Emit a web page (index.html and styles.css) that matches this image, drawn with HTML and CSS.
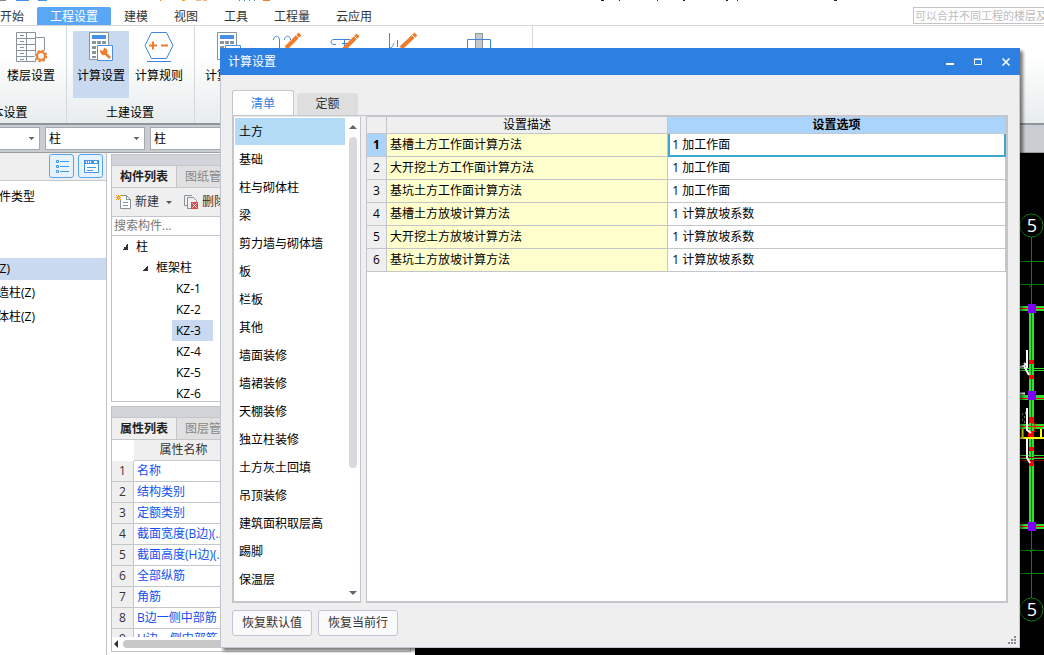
FILE: index.html
```html
<!DOCTYPE html>
<html lang="zh-CN">
<head>
<meta charset="utf-8">
<title>计算设置</title>
<link rel="stylesheet" href="styles.css">
</head>
<body>
<div class="app">
  <header class="titlebar">
    <svg width="840" height="3" viewBox="0 0 840 3" aria-hidden="true">
      <path d="M0 .5h6" stroke="#888"/><path d="M16 .5h13M38 .5h9" stroke="#4a90e2"/>
      <path d="M160.500 0v1" stroke="#f07c2b"/><path d="M182 0h3v1h-3z" fill="#f0a020"/><path d="M196 .5h5M203 .5h4" stroke="#f3b48a"/><path d="M239 .5h1M244 .5h1M249 .5h1M254 .5h1" stroke="#4a7fc0"/><path d="M263 .5h7" stroke="#f07c2b"/>
      <path d="M601 .5h3M619 .5h1M657 .5h1M683 .5h2M726 .5h2M737 .5h1M834 .5h3" stroke="#222"/>
    </svg>
  </header>
  <div class="menu">
    <nav class="menu-tabs">
      <button class="menu-tab">开始</button>
      <button class="menu-tab active">工程设置</button>
      <button class="menu-tab">建模</button>
      <button class="menu-tab">视图</button>
      <button class="menu-tab">工具</button>
      <button class="menu-tab">工程量</button>
      <button class="menu-tab">云应用</button>
    </nav>
    <input class="help-search" type="text" aria-label="搜索功能" placeholder="可以合并不同工程的楼层及构件">
  </div>

  <div class="ribbon">
    <section class="group group-first">
      <div class="tools">
        <button class="tool">
          <svg width="32" height="32" viewBox="0 0 32 32" fill="none" stroke="#87949b">
            <path d="M1.500 1.500h19v29h-19zM1.500 7.500h19M1.500 13.500h19M1.500 19.500h19M1.500 25.500h19M11.500 1.500v29M20.500 6.500h9v14M5 4.500h4M5 10.500h4M5 16.500h4M5 22.500h4M5 28.500h4"/>
            <circle cx="26" cy="25" r="6.500" fill="#f3f3f3" stroke="none"/>
            <circle cx="26" cy="25" r="4" stroke="#f07c2b" stroke-width="2"/>
            <circle cx="26" cy="25" r="5.500" stroke="#f07c2b" stroke-width="1.500" stroke-dasharray="2.200 2.120"/>
          </svg>
          <span>楼层设置</span>
        </button>
      </div>
      <h2 class="caption">基本设置</h2>
    </section>
    <section class="group">
      <div class="tools">
        <button class="tool selected">
          <svg width="32" height="32" viewBox="0 0 32 32" fill="none">
            <path d="M4.500 1.500h19v27h-19z" fill="#fff" stroke="#87949b"/>
            <path d="M7 4h14v4H7z" fill="#4a90e2"/>
            <path d="M7 10h4v3H7zM12 10h4v3h-4zM17 10h4v3h-4zM7 15h4v3H7zM7 20h4v3H7zM7 25h4v2H7z" fill="#87949b"/>
            <path d="M12.500 14.500h15v15h-15z" fill="#fff" stroke="#4a90e2"/>
            <path d="M19 21l6 6" stroke="#f07c2b" stroke-width="2.500"/>
            <path d="M15 19l3 1 1-3c3 0 4 3 3 5l-2 2c-3 1-5-2-5-5z" fill="#f07c2b"/>
          </svg>
          <span>计算设置</span>
        </button>
        <button class="tool">
          <svg width="32" height="32" viewBox="0 0 32 32" fill="none" stroke="#3f86dc">
            <path d="M8.500 1.500h15l6.500 13-6.500 13h-15L2 14.500zM4 30.500h24"/>
            <path d="M6 14.500h8M10 10.500v8M18 14.500h7" stroke="#f07c2b" stroke-width="2"/>
          </svg>
          <span>计算规则</span>
        </button>
      </div>
      <h2 class="caption">土建设置</h2>
    </section>
    <section class="group">
      <div class="tools">
        <button class="tool">
          <svg width="32" height="32" viewBox="0 0 32 32" fill="none">
            <path d="M4.500 1.500h19v27h-19z" fill="#fff" stroke="#87949b"/>
            <path d="M7 4h14v4H7z" fill="#4a90e2"/>
            <path d="M7 10h4v3H7zM12 10h4v3h-4zM17 10h4v3h-4zM7 15h4v3H7z" fill="#87949b"/>
            <path d="M12.500 14.500h15v15h-15z" fill="#fff" stroke="#4a90e2"/>
          </svg>
          <span>计算设置</span>
        </button>
        <button class="tool" aria-label="比重设置">
          <svg width="32" height="32" viewBox="0 0 32 32" fill="none" stroke="#3f86dc">
            <path d="M2.500 9c0-5 6-5 6 0v9M13.500 9c0-5 6-5 6 0"/><path d="M15 17L29 3" stroke="#f07c2b" stroke-width="4"/><path d="M25 4l3 3" stroke="#fff"/>
          </svg>
        </button>
        <button class="tool" aria-label="弯钩设置">
          <svg width="32" height="32" viewBox="0 0 32 32" fill="none" stroke="#3f86dc">
            <path d="M21 8.500H5c-4 0-4 5 0 5h2M13 12.500h9M15.500 8v8"/><path d="M15 18L29 4" stroke="#f07c2b" stroke-width="4"/><path d="M25 5l3 3" stroke="#fff"/>
          </svg>
        </button>
        <button class="tool" aria-label="损耗设置">
          <svg width="32" height="32" viewBox="0 0 32 32" fill="none" stroke="#3f86dc">
            <path d="M2.500 2v15M2 17c4 0 4-3 5-5M10.500 9v7"/><path d="M14 17L29 3" stroke="#f07c2b" stroke-width="4"/><path d="M25 4l3 3" stroke="#fff"/>
          </svg>
        </button>
        <button class="tool tool-wide" aria-label="弯曲调整值设置">
          <svg width="32" height="32" viewBox="0 0 32 32" fill="none">
            <path d="M12.500 2.500h7v20h-7z" fill="#c3c8cc" stroke="#87949b"/><path d="M4.500 8.500h23v14h-23z" stroke="#3f86dc"/>
          </svg>
        </button>
      </div>
      <h2 class="caption">钢筋设置</h2>
    </section>
  </div>

  <div class="selectors">
    <select class="picker picker-first" aria-label="楼层"><option></option></select>
    <select class="picker" aria-label="构件大类"><option>柱</option></select>
    <select class="picker" aria-label="构件类型"><option>柱</option></select>
  </div>

  <main class="workspace">
    <aside class="navigator">
      <div class="nav-tools">
        <button class="square" aria-label="列表视图">
          <svg width="16" height="16" viewBox="0 0 16 16" fill="none" stroke="#3f98ee"><path d="M2.500 2.500h2v2h-2zM2.500 7.500h2v2h-2zM2.500 12.500h2v2h-2zM6 3.500h9M6 8.500h9M6 13.500h9"/></svg>
        </button>
        <button class="square" aria-label="面板视图">
          <svg width="16" height="16" viewBox="0 0 16 16" fill="none"><path d="M1.500 2.500h14v12h-14z" fill="#fff" stroke="#3f98ee"/><path d="M1 2h15v4H1z" fill="#3f98ee"/><path d="M3 4h1M5 4h1M7 4h1M11 4h3" stroke="#fff" stroke-width="2"/><path d="M4 9.500h9M4 12.500h6" stroke="#3f98ee"/></svg>
        </button>
      </div>
      <ul class="types">
        <li class="types-head">构件类型</li>
        <li class="current">柱(Z)</li>
        <li>构造柱(Z)</li>
        <li>砌体柱(Z)</li>
      </ul>
    </aside>

    <div class="docks">
      <section class="dock dock-tree">
        <div class="grip"></div>
        <div class="dock-tabs"><button class="dock-tab on">构件列表</button><button class="dock-tab">图纸管理</button></div>
        <div class="dock-tools">
          <button class="action">
            <svg width="16" height="16" viewBox="0 0 16 16" fill="none"><path d="M4.500 1.500h6l4 4v9h-10z" fill="#fff" stroke="#87949b"/><path d="M10.500 1.500v4h4M7 8.500h5M7 11.500h5" stroke="#87949b"/><path d="M0 1h5v5H0z" fill="#efefef"/><path d="M0 1h1v1H0zM2 1h1v1H2zM4 1h1v1H4zM1 2h3v1H1zM0 3h2v1H0zM3 3h2v1H3zM1 4h3v1H1zM0 5h1v1H0zM2 5h1v1H2zM4 5h1v1H4z" fill="#f39a1f"/></svg>
            新建<i class="caret"></i>
          </button>
          <button class="action">
            <svg width="16" height="16" viewBox="0 0 16 16" fill="none"><path d="M9 1.500H1.500v10H4M4.500 3.500h6l3 3v8h-9z" stroke="#87949b"/><path d="M8 8h7v7H8z" fill="#d94a4a"/><path d="M9.500 9.500l4 4M13.500 9.500l-4 4" stroke="#fff"/></svg>
            删除
          </button>
        </div>
        <input class="find" type="text" aria-label="搜索构件" placeholder="搜索构件...">
        <ul class="tree">
          <li class="level-1"><i class="fold"></i>柱</li>
          <li class="level-2"><i class="fold"></i>框架柱</li>
          <li class="level-3"><span>KZ-1</span></li>
          <li class="level-3"><span>KZ-2</span></li>
          <li class="level-3"><span class="picked">KZ-3</span></li>
          <li class="level-3"><span>KZ-4</span></li>
          <li class="level-3"><span>KZ-5</span></li>
          <li class="level-3"><span>KZ-6</span></li>
        </ul>
      </section>
      <section class="dock dock-props">
        <div class="grip"></div>
        <div class="dock-tabs"><button class="dock-tab on">属性列表</button><button class="dock-tab">图层管理</button></div>
        <div class="props-view">
          <table class="props">
            <colgroup><col class="props-no"><col class="props-name"><col></colgroup>
            <thead><tr><td class="corner"></td><th>属性名称</th><th></th></tr></thead>
            <tbody>
              <tr><th>1</th><td>名称</td><td></td></tr>
              <tr><th>2</th><td>结构类别</td><td></td></tr>
              <tr><th>3</th><td>定额类别</td><td></td></tr>
              <tr><th>4</th><td>截面宽度(B边)(mm)</td><td></td></tr>
              <tr><th>5</th><td>截面高度(H边)(mm)</td><td></td></tr>
              <tr><th>6</th><td>全部纵筋</td><td></td></tr>
              <tr><th>7</th><td>角筋</td><td></td></tr>
              <tr><th>8</th><td>B边一侧中部筋</td><td></td></tr>
              <tr><th>9</th><td>H边一侧中部筋</td><td></td></tr>
            </tbody>
          </table>
        </div>
        <div class="hscroll"><i class="arrow-left"></i><div class="hthumb"></div></div>
      </section>
    </div>

    <div class="drawing">
      <svg width="24" height="502" viewBox="1020 153 24 502" fill="none" role="img" aria-label="轴网">
        <g stroke="#0b7d0b">
          <circle cx="1031.500" cy="225.500" r="11.500"/><circle cx="1031.500" cy="609.500" r="11.500"/>
          <path d="M1031.500 237v67M1020 261.500h24M1020 284.500h24M1031.500 531v67M1020 550.500h24M1020 573.500h24M1029 287l4-3M1030 552l4-3"/>
        </g>
        <g stroke="#2fe02f" stroke-width="5"><path d="M1031.500 305v221M1020 308.500h24M1020 397.500h24M1020 426.500h24M1020 526.500h24"/></g>
        <path d="M1020 368.500h24M1020 370.500h24M1020 455.500h24M1020 458.500h24" stroke="#2fe02f"/>
        <path d="M1020 308.500h24M1020 398.500h24M1020 426.500h24M1020 526.500h24M1031.500 305v221" stroke="#f00"/>
        <path d="M1020 457.500h24M1020 460.500h24" stroke="#8c0000"/>
        <path d="M1020 438h24M1022.500 429v9M1041 429v9" stroke="#ff0" stroke-width="2"/>
        <path d="M1029 360h5v4h-5zM1029 375h5v4h-5zM1029 417h5v6h-5zM1028 431h6v6h-6zM1029 447h5v4h-5zM1029 461h5v5h-5z" fill="#f00"/>
        <path d="M1032 423l3 1v7l-3 2" stroke="#f00"/>
        <path d="M1027 350v18M1020 367l4-1 5 9M1024 363l3 3M1020 393.500h5M1027 408v22l4 3M1027 438v20l3 5" stroke="#fff" stroke-width="2"/>
        <path d="M1022 414h1M1024 417h1M1022 420h1M1025 413h1M1024 422h1" stroke="#fff"/>
        <path d="M1028 304h8v9h-8zM1028 391h8v9h-8zM1028 522h8v9h-8z" fill="#8000ff"/>
        <text class="axis" x="1032" y="232">5</text><text class="axis" x="1032" y="616">5</text>
      </svg>
    </div>
  </main>
</div>

<div class="dialog" role="dialog" aria-labelledby="dialog-title">
  <div class="dialog-bar">
    <h1 id="dialog-title">计算设置</h1>
    <button class="win" aria-label="最小化"><svg width="10" height="10" viewBox="0 0 10 10"><path d="M1 7h8" stroke="#fff" stroke-width="2"/></svg></button>
    <button class="win" aria-label="最大化"><svg width="10" height="10" viewBox="0 0 10 10" fill="none" stroke="#fff"><path d="M1.500 2.500h7v5h-7zM1 2h8"/></svg></button>
    <button class="win" aria-label="关闭"><svg width="10" height="10" viewBox="0 0 10 10"><path d="M1.500 1.500l7 7M8.500 1.500l-7 7" stroke="#fff" stroke-width="1.600"/></svg></button>
  </div>
  <div class="dialog-body">
    <div class="tabs" role="tablist">
      <button class="tab tab-on" role="tab" aria-selected="true">清单</button>
      <button class="tab" role="tab" aria-selected="false">定额</button>
    </div>
    <div class="panes">
      <div class="listbox">
        <ul class="items">
          <li class="item-on">土方</li><li>基础</li><li>柱与砌体柱</li><li>梁</li><li>剪力墙与砌体墙</li><li>板</li><li>栏板</li><li>其他</li><li>墙面装修</li><li>墙裙装修</li><li>天棚装修</li><li>独立柱装修</li><li>土方灰土回填</li><li>吊顶装修</li><li>建筑面积取层高</li><li>踢脚</li><li>保温层</li>
        </ul>
        <div class="vscroll"><i class="arrow-up"></i><div class="track"><div class="vthumb"></div></div><i class="arrow-down"></i></div>
      </div>
      <div class="grid-box">
        <table class="grid">
          <colgroup><col class="col-no"><col class="col-name"><col></colgroup>
          <thead><tr><td></td><th>设置描述</th><th class="head-on">设置选项</th></tr></thead>
          <tbody>
            <tr><th class="no-on">1</th><td class="name">基槽土方工作面计算方法</td><td class="editing">1 加工作面</td></tr>
            <tr><th>2</th><td class="name">大开挖土方工作面计算方法</td><td>1 加工作面</td></tr>
            <tr><th>3</th><td class="name">基坑土方工作面计算方法</td><td>1 加工作面</td></tr>
            <tr><th>4</th><td class="name">基槽土方放坡计算方法</td><td>1 计算放坡系数</td></tr>
            <tr><th>5</th><td class="name">大开挖土方放坡计算方法</td><td>1 计算放坡系数</td></tr>
            <tr><th>6</th><td class="name">基坑土方放坡计算方法</td><td>1 计算放坡系数</td></tr>
          </tbody>
        </table>
      </div>
    </div>
    <div class="footer">
      <button class="btn">恢复默认值</button>
      <button class="btn">恢复当前行</button>
      <svg class="resize" width="8" height="8" viewBox="0 0 8 8" fill="#888d93" aria-hidden="true"><path d="M6 0h2v2H6zM3 3h2v2H3zM6 3h2v2H6zM0 6h2v2H0zM3 6h2v2H3zM6 6h2v2H6z"/></svg>
    </div>
  </div>
</div>
</body>
</html>
```

FILE: styles.css
```css
* { box-sizing: border-box; }
body {
  margin: 0;
  height: 100vh;
  overflow: hidden;
  background: #fff;
  color: #000;
  font: 12px/20px "Open Sans", "Noto Sans CJK SC", sans-serif;
}
button, input, select { font: inherit; color: inherit; margin: 0; padding: 0; border: 0; background: none; border-radius: 0; }
ul { list-style: none; margin: 0; padding: 0; }
h1, h2 { margin: 0; font-size: 12px; font-weight: 400; }
svg { display: block; flex: none; }
table { border-collapse: separate; border-spacing: 0; table-layout: fixed; width: 100%; }
th, td { padding: 0; font-weight: 400; text-align: left; white-space: nowrap; overflow: hidden; }

.app { display: flex; flex-direction: column; height: 100vh; overflow: hidden; }
.titlebar { height: 7px; flex: none; overflow: hidden; }

.menu { display: flex; height: 19px; flex: none; border-bottom: 1px solid #d5d5d5; }
.menu-tabs { display: flex; margin-left: -13px; }
.menu-tab { padding: 1px 13px 0; line-height: 18px; color: #333; white-space: nowrap; }
.menu-tab.active { background: #5aa7f5; color: #fff; border-radius: 2px 2px 0 0; }
.help-search { margin-left: auto; width: 131px; height: 17px; padding-left: 1px; border: 1px solid #c4c4c4; border-right: 0; font-size: 11px; line-height: 15px; }
.help-search::placeholder { color: #bdbdbd; opacity: 1; }

.ribbon { display: flex; height: 97px; flex: none; background: linear-gradient(#fff 30%, #e7ecec); }
.group { display: flex; flex-direction: column; padding: 5px 7px 0 6px; border-right: 1px solid #d4d8da; flex: none; }
.group-first { width: 125px; margin-left: -58px; }
.group-first .tools { justify-content: flex-end; }
.tools { display: flex; gap: 2px; height: 67px; }
.tool { width: 56px; display: flex; flex-direction: column; align-items: center; gap: 3px; white-space: nowrap; }
.tool-wide { width: 92px; }
.tool.selected { background: #c9d9f0; }
.caption { text-align: center; line-height: 20px; padding-top: 5px; }

.selectors { display: flex; gap: 5px; height: 30px; flex: none; padding-top: 2px; border-top: 2px solid #8f969a; border-bottom: 1px solid #9a9ea3; background: #c9ccd1; }
.picker {
  appearance: none;
  width: 100px;
  height: 23px;
  padding-left: 3px;
  border: 1px solid #a6a9ad;
  line-height: 21px;
  background:
    linear-gradient(#666, #666) no-repeat right 5px top 9px / 5px 1px,
    linear-gradient(#666, #666) no-repeat right 6px top 10px / 3px 1px,
    linear-gradient(#666, #666) no-repeat right 7px top 11px / 1px 1px,
    #fff;
}
.picker-first { margin-left: -60px; }

.workspace { display: flex; flex: 1; min-height: 0; }
.navigator { width: 107px; flex: none; border-right: 1px solid #bfc2c9; }
.nav-tools { display: flex; justify-content: flex-end; gap: 4px; height: 28px; padding: 1px 3px 0; background: #efefef; border-bottom: 1px solid #c3c7cc; }
.square { width: 25px; height: 24px; display: grid; place-items: center; border: 1px solid #55a5f0; border-radius: 3px; background: #e6f2fd; }
.types { padding-top: 5px; }
.types li { height: 24px; padding-top: 1px; margin-left: -15px; white-space: nowrap; }
.types .types-head { height: 72px; margin-left: -13px; }
.types .current { height: 22px; margin: 0 0 2px; background: #c9d9f0; text-indent: -16px; }

.docks { width: 308px; flex: none; display: flex; flex-direction: column; gap: 4px; padding: 1px 4px 3px; }
.dock { border: 1px solid #bfc2c9; background: #fff; display: flex; flex-direction: column; overflow: hidden; }
.dock-tree { height: 248px; flex: none; }
.dock-props { flex: 1; min-height: 0; }
.grip { height: 11px; flex: none; background: #d2d4da; border-bottom: 1px solid #c3c7cc; }
.dock-tabs { display: flex; height: 22px; flex: none; background: #e0e0e0; border-bottom: 1px solid #c3c7cc; }
.dock-tab { padding: 0 8px; color: #888; border-right: 1px solid #c3c7cc; line-height: 21px; }
.dock-tab.on { background: #efefef; color: #222; font-weight: 700; }
.dock-tools { display: flex; gap: 11px; height: 29px; flex: none; padding: 0 4px; background: #efefef; border-bottom: 1px solid #c3c7cc; }
.action { display: flex; align-items: center; gap: 3px; white-space: nowrap; color: #333; }
.caret { border: 3px solid transparent; border-top-color: #555; border-bottom: 0; margin-left: 4px; }
.find { height: 19px; flex: none; padding-left: 2px; border-bottom: 1px solid #c3c7cc; }
.find::placeholder { color: #777; opacity: 1; }
.tree li { display: flex; align-items: center; height: 21px; line-height: 21px; }
.fold { width: 6px; height: 6px; margin-right: 8px; background: linear-gradient(135deg, transparent 50%, #333 50%); }
.level-1 { padding-left: 10px; }
.level-2 { padding-left: 30px; }
.level-3 { padding-left: 60px; }
.level-3 span { width: 41px; padding-left: 4px; }
.picked { background: #c9d9f0; }

.props-view { flex: 1; min-height: 0; overflow: hidden; }
.props-no { width: 22px; }
.props-name { width: 100px; }
.props td, .props th { height: 21px; line-height: 20px; border-bottom: 1px solid #c3c7cc; border-right: 1px solid #c3c7cc; }
.props thead th { line-height: 20px; text-align: center; background: #efefef; color: #333; }
.props .corner { border-color: transparent; }
.props tbody th { text-align: center; background: #efefef; color: #333; }
.props tbody td { padding: 0 4px 0 3px; color: #1252f0; text-overflow: ellipsis; }
.hscroll { display: flex; align-items: center; gap: 5px; height: 14px; flex: none; padding: 0 2px; }
.arrow-left { border: 4px solid transparent; border-right-color: #333; border-left: 0; }
.hthumb { flex: 1; height: 8px; border-radius: 4px; background: #c8c8c8; }

.drawing { flex: 1; min-width: 0; background: #000; display: flex; justify-content: flex-end; }
.axis { fill: #fff; font: 18px "Open Sans", sans-serif; text-anchor: middle; }

.dialog { position: absolute; left: 220px; right: 24px; top: 48px; bottom: 7px; display: flex; flex-direction: column; background: #efefef; box-shadow: 3px 3px 3px rgba(0, 0, 0, .5); }
.dialog-bar { display: flex; align-items: center; gap: 8px; height: 27px; flex: none; padding: 0 4px 0 8px; background: #2d80e2; color: #fff; }
.dialog-bar h1 { flex: 1; }
.win { width: 20px; height: 20px; display: grid; place-items: center; }
.dialog-body { flex: 1; min-height: 0; display: flex; flex-direction: column; padding: 15px 11px 0; border: 1px solid #c0c5cf; border-top: 0; }
.tabs { display: flex; align-items: flex-end; gap: 3px; height: 25px; flex: none; }
.tab { width: 61px; height: 22px; border-radius: 3px 3px 0 0; background: #dedede; color: #333; }
.tab-on { width: 62px; height: 26px; margin-bottom: -1px; border: 1px solid #c3c7cc; border-bottom: 0; background: #fff; color: #2d80e2; }
.panes { flex: 1; min-height: 0; display: flex; gap: 5px; border-top: 1px solid #c3c7cc; }
.listbox { width: 129px; flex: none; display: flex; justify-content: space-between; padding: 1px 3px 0 1px; border: 1px solid #c3c7cc; border-left-width: 2px; border-bottom-width: 2px; border-top-color: #e4e6e8; background: #fff; overflow: hidden; }
.items { width: 110px; }
.items li { height: 28px; line-height: 28px; padding-left: 4px; }
.item-on { background: linear-gradient(#b3dbf6, #b3dbf6) no-repeat 0 0 / 100% 27px; }
.vscroll { width: 9px; display: flex; flex-direction: column; align-items: center; padding: 7px 0 6px; }
.arrow-up { border: 4px solid transparent; border-bottom-color: #666; border-top: 0; }
.arrow-down { border: 4px solid transparent; border-top-color: #666; border-bottom: 0; }
.track { flex: 1; width: 8px; padding-top: 8px; }
.vthumb { height: 73%; border-radius: 4px; background: #dadada; }
.grid-box { flex: 1; min-width: 0; border: 2px solid #c3c7cc; border-top-width: 1px; border-left-width: 1px; background: #fff; }
.col-no { width: 20px; }
.col-name { width: 44%; }
.grid th, .grid td { height: 23px; line-height: 22px; border-right: 1px solid #c3c7cc; border-bottom: 1px solid #c3c7cc; }
.grid thead th, .grid thead td { height: 17px; line-height: 16px; text-align: center; background: #efefef; }
.grid thead .head-on { background: #abd4fc; font-weight: 700; }
.grid tbody th { text-align: center; background: #efefef; }
.grid tbody .no-on { background: #abd4fc; font-weight: 700; }
.grid tbody td { padding-left: 4px; }
.grid tbody .name { padding-left: 3px; background: #ffffcd; }
.grid tbody .editing { padding-left: 2px; border: 2px solid #3ba9d0; border-top: 0; line-height: 21px; }
.footer { display: flex; gap: 6px; height: 44px; flex: none; padding-top: 7px; }
.btn { width: 80px; height: 26px; border: 1px solid #c0c5d2; border-radius: 3px; background: #fafafa; color: #333; }
.resize { margin: auto -8px 3px auto; }
```
